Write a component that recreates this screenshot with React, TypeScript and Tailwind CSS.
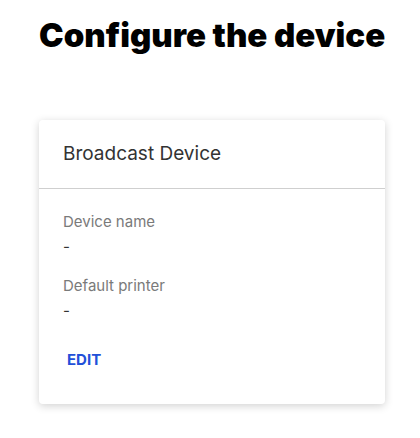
import { useState } from "react";

const Field = ({ label, value }: { label: string; value: string }) => {
  return (
    <div className="flex flex-col">
      <p className="text-[15px] leading-[22px] text-[#7a7a7a]">{label}</p>
      <p className="text-[15px] leading-[22px] mt-[3px] text-[#333]">{value}</p>
    </div>
  );
};

const App = () => {
  const [editing, setEditing] = useState(false);

  return (
    <div
      className="min-h-screen bg-white pl-[39px] pt-[13px]"
      style={{ fontFamily: "Inter, 'Noto Sans', sans-serif" }}
    >
      <h1 className="w-[346px] whitespace-nowrap text-center text-[33px] leading-[44px] font-black text-black">
        Configure the device
      </h1>

      <div className="mt-[63px] w-[346px] rounded-[4px] bg-white shadow-[0_2px_8px_rgba(0,0,0,0.18)]">
        <div className="h-[69px] flex items-center px-[24px] border-b border-[#cfcfcf]">
          <h2 className="text-[19px] text-[#333] font-normal">Broadcast Device</h2>
        </div>
        <div className="px-[24px] pt-[22px] pb-[32px] flex flex-col gap-[17px]">
          <Field label="Device name" value="-" />
          <Field label="Default printer" value="-" />
          <div className="mt-[8px]">
            <button
              className="px-[4px] text-[15px] font-bold text-[#2250d9] uppercase"
              onClick={() => setEditing(!editing)}
            >
              Edit
            </button>
          </div>
        </div>
      </div>
    </div>
  );
};

export default App;
